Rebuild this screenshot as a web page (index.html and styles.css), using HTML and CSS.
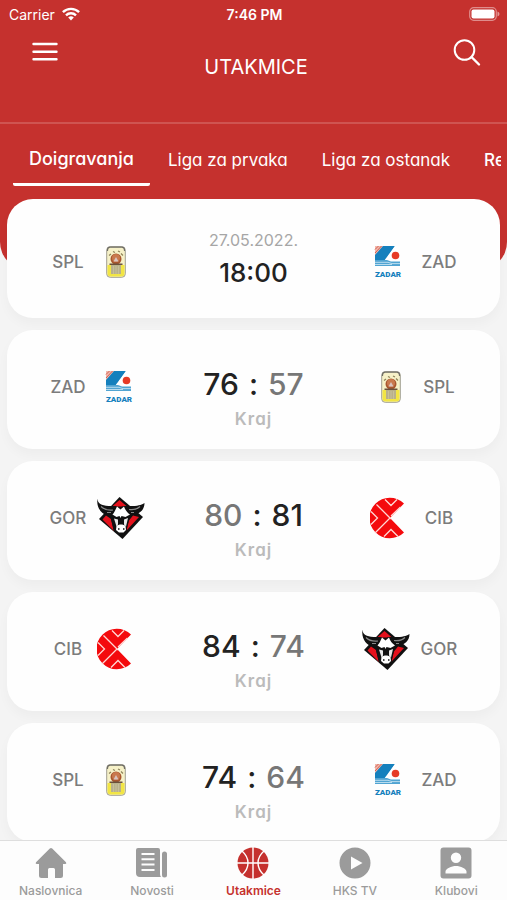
FILE: index.html
```html
<!DOCTYPE html>
<html lang="hr">
<head>
<meta charset="utf-8">
<meta name="viewport" content="width=device-width, initial-scale=1">
<title>Utakmice</title>
<link rel="stylesheet" href="styles.css">
</head>
<body>
<svg class="sprite" aria-hidden="true">
  <symbol id="spl" viewBox="0 0 20 32">
    <rect x="0.7" y="0.7" width="18.6" height="30.6" rx="3.5" fill="#f6f1c8" stroke="#a19f92" stroke-width="1"/>
    <path d="M1.500 5V4q0-2.500 2.500-2.800h12q2.500.3 2.500 2.800v1" fill="none" stroke="#6f6d66" stroke-width="1.200"/>
    <path d="M1.500 19h17v8.500a3 3 0 0 1-3 3h-11a3 3 0 0 1-3-3z" fill="#f2e544"/>
    <path d="M3 9.500 5 8M7 5.500l2 1M12 5l2 1M15 7.500l2 2" stroke="#8d8259" stroke-width="1.200"/>
    <circle cx="10" cy="13" r="5.500" fill="#a8562f"/>
    <circle cx="10" cy="12" r="4" fill="#c9794e"/>
    <path d="M7.500 15.500 10 11l2.500 4.500z" fill="#d8c3c0"/>
    <path d="M3.500 17.500h13v1.500h-13z" fill="#6b503b"/>
    <path d="M5 19h10v9H5z" fill="#b9b18a"/>
    <path d="M7.500 20v8M10 20v8M12.500 20v8" stroke="#cdc6a4" stroke-width=".7"/>
  </symbol>
  <symbol id="zad" viewBox="0 0 26 32" overflow="visible">
    <path d="M0 0h20L9 15H0z" fill="#1580bd"/>
    <path d="M0 0h8L0 9z" fill="#f1b9ad"/>
    <path d="M0 3.500 3.500 0M0 7l6.500-7" stroke="#d55e50" stroke-width="1"/>
    <path d="m20 0-9.500 14h3L25 2V0z" fill="#fff"/>
    <circle cx="20.500" cy="9.500" r="3.800" fill="#e63b26"/>
    <path d="M0 14h12l4 1.500h9V20H0z" fill="#51a4d2"/>
    <path d="M0 16.300h13l4 1.300h8M0 18.500h17" stroke="#d4ebf5" stroke-width=".8" fill="none"/>
    <text x="13" y="31" text-anchor="middle" class="zad-name">ZADAR</text>
  </symbol>
  <symbol id="gor" viewBox="0 0 48 42">
    <path d="M22.500 0 46 20 25.500 42 2 22z" fill="#111"/>
    <path d="M22.500 3 30 9.500H15z" fill="#e4111c"/>
    <path d="M9 18.500 5.500 22.500 17 34l-3-12zM36 18.500l6 1.500-12.500 13.500 2.500-10z" fill="#e4111c"/>
    <path d="M.5 1.500c0 5 4 7 11 7.500h7l4 2 4-2h9c7 0 10-2 12-3 0 7-5 11-12 12l-3 2-3 13-4 4h-5l-4-4-3-13-4-2C5 17-1 11 .5 1.500z" fill="#111"/>
    <path d="M4 9.500c4 4 8 4 12 3.500M32 12.500c4 .5 8 0 11-3M10 15.500h4M34 15.500h3" stroke="#888" stroke-width="1.200" fill="none"/>
    <path d="M15.500 17.500c2-2 3-5 4.500-8l3.500 3 3.500-3c1 3 3 6 6 8l-4.500 2.500-4-1-1 2-1-2-3 1z" fill="#fff"/>
    <path d="M17 21.500l4 1v5l-1.500 2zM31 21l-4 1.500v5l2 2z" fill="#e8e8e8"/>
    <path d="M19.500 29c2-2 7-2 9 0l.5 4-2.500 2.500H22L19 33z" fill="#fff"/>
    <path d="M21 32h1.500M26 32h1.500" stroke="#111" stroke-width="1.500"/>
  </symbol>
  <symbol id="cib" viewBox="0 0 36 42">
    <path d="M34 6.500A20.300 20.300 0 1 0 34 35.500L20 21z" fill="#f40a0d"/>
    <path d="M6.500 7.500 20 21 5 36M15 2.500l6 6 6-6M12 13l9 9M30.500 10 21 19M1 14.500l6.500 6.500L1 27.500M14 39.500l7-7 7 7" fill="none" stroke="#ffd9d5" stroke-width="1.300"/>
  </symbol>
</svg>
<div class="app">
  <header class="top">
    <div class="status">
      <span class="carrier">Carrier
        <svg class="wifi" viewBox="0 0 18 14" aria-hidden="true"><g fill="none" stroke="#fff" stroke-width="2.400"><path d="M.9 5.200a11.600 11.600 0 0 1 16.200 0"/><path d="M4 8.300a7.200 7.200 0 0 1 10 0"/></g><path d="M6.200 10.600a4 4 0 0 1 5.600 0L9 13.600z" fill="#fff"/></svg>
      </span>
      <span class="clock">7:46 PM</span>
      <svg class="battery" viewBox="0 0 31 14" aria-hidden="true"><rect x=".7" y=".7" width="26.600" height="12.600" rx="4" fill="none" stroke="#fff" stroke-opacity=".45" stroke-width="1.200"/><rect x="2.500" y="2.500" width="23" height="9" rx="2" fill="#fff"/><path d="M28.500 4.500q2 .7 2 2.500t-2 2.500z" fill="#fff" fill-opacity=".5"/></svg>
    </div>
    <div class="toolbar">
      <button class="icon-btn" type="button" aria-label="Izbornik"><svg viewBox="0 0 28 28" aria-hidden="true"><path d="M2.500 5h23M2.500 12.700h23M2.500 20.300h23" stroke="#fff" stroke-width="2.400" stroke-linecap="round"/></svg></button>
      <h1>UTAKMICE</h1>
      <button class="icon-btn" type="button" aria-label="Traži"><svg viewBox="0 0 28 28" aria-hidden="true"><g fill="none" stroke="#fff" stroke-width="2" stroke-linecap="round"><circle cx="11.500" cy="11" r="9.800"/><path d="m18.500 18 7.500 7.500" stroke-width="2.400"/></g></svg></button>
    </div>
    <nav class="tabs" aria-label="Natjecanja">
      <a class="tab active" href="#" aria-current="page">Doigravanja</a>
      <a class="tab" href="#">Liga za prvaka</a>
      <a class="tab" href="#">Liga za ostanak</a>
      <a class="tab medium" href="#">Re</a>
    </nav>
  </header>
  <main>
    <ul class="matches">
      <li class="match upcoming">
        <span class="team">SPL</span><span class="logo home"><svg class="spl"><use href="#spl"/></svg></span>
        <div class="result"><span class="date">27.05.2022.</span><span class="time">18:00</span></div>
        <span class="logo away"><svg class="zad"><use href="#zad"/></svg></span><span class="team">ZAD</span>
      </li>
      <li class="match">
        <span class="team">ZAD</span><span class="logo home"><svg class="zad"><use href="#zad"/></svg></span>
        <div class="result"><span class="score"><b>76</b><b>:</b><span>57</span></span><span class="state">Kraj</span></div>
        <span class="logo away"><svg class="spl"><use href="#spl"/></svg></span><span class="team">SPL</span>
      </li>
      <li class="match">
        <span class="team">GOR</span><span class="logo home"><svg class="gor"><use href="#gor"/></svg></span>
        <div class="result"><span class="score"><span>80</span><b>:</b><b>81</b></span><span class="state">Kraj</span></div>
        <span class="logo away"><svg class="cib"><use href="#cib"/></svg></span><span class="team">CIB</span>
      </li>
      <li class="match">
        <span class="team">CIB</span><span class="logo home"><svg class="cib"><use href="#cib"/></svg></span>
        <div class="result"><span class="score"><b>84</b><b>:</b><span>74</span></span><span class="state">Kraj</span></div>
        <span class="logo away"><svg class="gor"><use href="#gor"/></svg></span><span class="team">GOR</span>
      </li>
      <li class="match">
        <span class="team">SPL</span><span class="logo home"><svg class="spl"><use href="#spl"/></svg></span>
        <div class="result"><span class="score"><b>74</b><b>:</b><span>64</span></span><span class="state">Kraj</span></div>
        <span class="logo away"><svg class="zad"><use href="#zad"/></svg></span><span class="team">ZAD</span>
      </li>
    </ul>
  </main>
  <nav class="bottom" aria-label="Glavna navigacija">
    <a href="#"><svg viewBox="0 0 32 32" aria-hidden="true"><path d="M14.800 1.600a1.800 1.800 0 0 1 2.400 0L31 15.200q1 1.500-.7 1.800H28v11.500a2.500 2.500 0 0 1-2.500 2.500H20v-8.500a1.500 1.500 0 0 0-1.500-1.500h-4a1.500 1.500 0 0 0-1.500 1.500V31H6.500A2.500 2.500 0 0 1 4 28.500V17H1.700Q0 16.700 1 15.200z"/></svg>Naslovnica</a>
    <a href="#"><svg viewBox="0 0 32 32" aria-hidden="true"><path fill-rule="evenodd" d="M2 1h20a2 2 0 0 1 2 2v24q0 2 1 3H4a4 4 0 0 1-4-4V3a2 2 0 0 1 2-2zm3.500 5v2h13V6zm0 5.300v2h13v-2zm0 5.300v2h13v-2zm0 5.300v2h13v-2z"/><rect x="26" y="4.500" width="5" height="26" rx="2.500"/></svg>Novosti</a>
    <a class="active" href="#" aria-current="page"><svg viewBox="0 0 32 32" aria-hidden="true"><circle cx="16" cy="16" r="15.500"/><path d="M16 0v32M0 16h32M5 4c8 7 8 17 0 24M27 4c-8 7-8 17 0 24" fill="none" stroke="#fff" stroke-width="1.400"/></svg>Utakmice</a>
    <a href="#"><svg viewBox="0 0 32 32" aria-hidden="true"><path fill-rule="evenodd" d="M16 .5a15.500 15.500 0 1 0 0 31 15.500 15.500 0 0 0 0-31zM12 9.500 23.500 16 12 22.500z"/></svg>HKS TV</a>
    <a href="#"><svg viewBox="0 0 32 32" aria-hidden="true"><path fill-rule="evenodd" d="M3.500.5h25a3 3 0 0 1 3 3v25a3 3 0 0 1-3 3h-25a3 3 0 0 1-3-3v-25a3 3 0 0 1 3-3zM16 5.500a5.200 5.200 0 1 0 0 10.400 5.200 5.200 0 0 0 0-10.400zM5.500 26.500h21v-2c0-3-6-5.500-10.500-5.500S5.500 21.500 5.500 24.500z"/></svg>Klubovi</a>
  </nav>
</div>
</body>
</html>
```
FILE: styles.css
```css
* { box-sizing: border-box; }

body {
  margin: 0;
  background: #f4f4f4;
  font-family: Inter, "Liberation Sans", sans-serif;
}

a { color: inherit; text-decoration: none; }

.sprite { position: absolute; width: 0; height: 0; }

.zad-name {
  font: 900 8px Roboto, "Liberation Sans", sans-serif;
  fill: #1580bd;
}

.app {
  display: flex;
  flex-direction: column;
  height: 100vh;
  overflow: hidden;
}

/* Header */
.top {
  flex: none;
  padding-bottom: 84px;
  border-radius: 0 0 28px 28px;
  background: #c5312e;
  color: #fff;
}

.status {
  display: grid;
  grid-template-columns: 1fr auto 1fr;
  align-items: center;
  height: 28px;
  padding: 0 7px 0 9px;
  font-size: 14px;
}

.carrier { display: flex; align-items: center; gap: 7px; }
.wifi { width: 18px; height: 14px; }
.clock { font-weight: 600; }
.battery { width: 31px; height: 14px; justify-self: end; }

.toolbar {
  display: flex;
  justify-content: space-between;
  height: 96px;
  padding: 11px 26px 0 31px;
  border-bottom: 2px solid #cf5451;
}

.toolbar h1 {
  margin: 13px 0 0;
  font-size: 20px;
  font-weight: 400;
  line-height: 30px;
}

.icon-btn {
  width: 28px;
  height: 28px;
  padding: 0;
  border: 0;
  background: none;
}

.icon-btn svg { display: block; width: 28px; height: 28px; }

.tabs {
  display: flex;
  gap: 2px;
  height: 62px;
  margin: 0 6px 0 13px;
  overflow: hidden;
}

.tab {
  flex: none;
  padding: 0 16px;
  font-size: 17px;
  line-height: 72px;
  font-feature-settings: "cv11";
}

.tab.active {
  border-bottom: 3px solid #fff;
  border-radius: 2px;
  font-size: 18px;
  font-weight: 500;
  line-height: 69px;
}

.tab.medium { font-weight: 500; }

/* Match list */
main {
  position: relative;
  flex: 1;
  min-height: 0;
  margin-top: -71px;
  overflow: hidden;
}

.matches {
  display: grid;
  gap: 12px;
  margin: 0;
  padding: 0 7px;
  list-style: none;
}

.match {
  display: grid;
  grid-template-columns: 50px 48px 1fr 48px 50px;
  column-gap: 4px;
  align-items: center;
  min-height: 119px;
  padding: 0 36px 5px;
  border-radius: 26px;
  background: #fefefe;
  box-shadow: 0 6px 12px rgba(0, 0, 0, 0.03);
}

.match.upcoming { padding-top: 6px; padding-bottom: 0; }

.team {
  color: #7c7c7c;
  font-size: 17px;
  font-weight: 500;
  text-align: center;
}

.logo { display: flex; }
.logo.away { justify-content: flex-end; }
.logo svg { display: block; overflow: visible; }

.gor { width: 48px; height: 42px; }
.cib { width: 36px; height: 42px; }
.away .cib { margin-right: 4px; }
.zad { width: 26px; height: 32px; margin: 0 9px; }
.spl { width: 20px; height: 32px; margin: 0 9px; }

.result {
  display: grid;
  justify-items: center;
  padding-top: 24px;
}

.upcoming .result { gap: 2px; padding: 0 0 2px; }

.date { color: #a6a6a6; font-size: 16px; line-height: 22px; }

.time {
  color: #222;
  font-size: 26px;
  font-weight: 500;
  line-height: 40px;
}

.score {
  display: flex;
  gap: 10px;
  color: #777;
  font-size: 30px;
  font-weight: 500;
  line-height: 40px;
}

.score b { color: #222; font-weight: 500; }

.state {
  color: #bbb;
  font-size: 17px;
  font-weight: 600;
  line-height: 30px;
  letter-spacing: 1px;
  font-feature-settings: "cv11";
}

/* Bottom navigation */
.bottom {
  position: relative;
  display: grid;
  grid-template-columns: repeat(5, 1fr);
  flex: none;
  height: 60px;
  border-top: 1px solid #dedede;
  background: #fdfdfd;
}

.bottom a {
  display: flex;
  flex-direction: column;
  align-items: center;
  padding-top: 6px;
  color: #9b9b9b;
  font-size: 12px;
  font-weight: 500;
  line-height: 24px;
}

.bottom svg { width: 32px; height: 32px; fill: currentColor; }
.bottom .active { color: #c5312e; font-weight: 600; }
```
